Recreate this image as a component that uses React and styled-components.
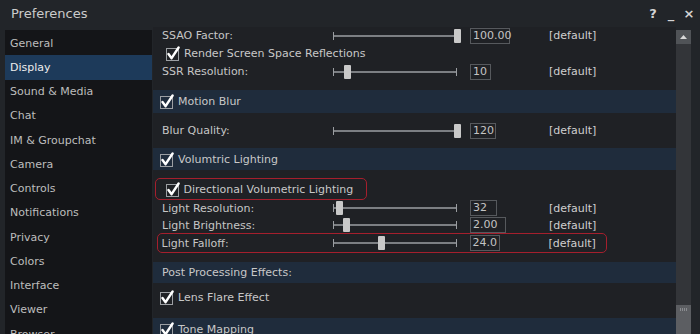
import React from 'react';
import styled, { createGlobalStyle } from 'styled-components';

const Global = createGlobalStyle`
  html, body { margin: 0; padding: 0; background: #212428; }
  body { font-family: "DejaVu Sans", "Liberation Sans", sans-serif; overflow: hidden; }
  * { box-sizing: border-box; }
`;

const Window = styled.div`
  width: 700px;
  height: 334px;
  background: #222529;
  display: flex;
  flex-direction: column;
  overflow: hidden;
  color: #c6c6c6;
  font-size: 11px;
`;

const TitleBar = styled.div`
  height: 27px;
  flex: none;
  display: flex;
  align-items: center;
  padding: 0 2px 0 11px;
`;

const Title = styled.div`
  flex: 1;
  font-size: 13px;
  color: #cbcbcb;
`;

const TitleButton = styled.div`
  width: 18px;
  text-align: center;
  font-size: 13px;
  font-weight: bold;
  color: #d4d4d4;
  line-height: 14px;
`;

const Body = styled.div`
  flex: 1;
  min-height: 0;
  display: flex;
`;

const Sidebar = styled.div`
  width: 147px;
  margin: 3px 1px 0 5px;
  padding-top: 1px;
  background: #141518;
  overflow: hidden;
  flex: none;
`;

const NavItem = styled.div`
  height: 24.25px;
  display: flex;
  align-items: center;
  padding-left: 5px;
  font-size: 11px;
  color: ${p => (p.$active ? '#ececec' : '#bdbdbd')};
  background: ${p => (p.$active ? '#1d3a5a' : 'transparent')};
`;

const Content = styled.div`
  flex: 1;
  display: flex;
  flex-direction: column;
  background: #1f2125;
  overflow: hidden;
`;

const Band = styled.div`
  height: ${p => p.$h}px;
  flex: none;
  display: flex;
  align-items: center;
  gap: 4px;
  padding-left: ${p => p.$pad}px;
  background: #1f2c3c;
  color: #c8c8c8;
`;

const Section = styled.div`
  height: ${p => p.$h}px;
  flex: none;
  display: flex;
  flex-direction: column;
  justify-content: ${p => p.$justify || 'flex-start'};
  padding-top: ${p => p.$pt || 0}px;
`;

const SliderRow = styled.div`
  height: ${p => p.$h}px;
  flex: none;
  display: grid;
  grid-template-columns: 171px 137px 79px auto;
  align-items: center;
  padding-left: ${p => p.$inset ?? 9}px;
`;

const Label = styled.div`
  color: #c6c6c6;
  white-space: nowrap;
`;

const Slider = styled.div`
  position: relative;
  width: 125px;
  height: 16px;
`;

const Track = styled.div`
  position: absolute;
  left: 0;
  right: 1px;
  top: 7px;
  height: 2px;
  background: #7c7f83;
`;

const Tick = styled.div`
  position: absolute;
  top: 4px;
  width: 1px;
  height: 8px;
  background: #9a9da1;
  ${p => (p.$side === 'left' ? 'left: 0;' : 'right: 1px;')}
`;

const Thumb = styled.div`
  position: absolute;
  top: 1px;
  width: 7px;
  height: 14px;
  border-radius: 1px;
  background: #c9c9c9;
`;

const ValueBox = styled.div`
  width: ${p => p.$w}px;
  height: 16px;
  border: 1px solid #56595d;
  padding: 0 2px;
  line-height: 14px;
  color: #c4c4c4;
  white-space: nowrap;
`;

const DefaultText = styled.div`
  color: #cfcfcf;
`;

const CheckRow = styled.div`
  height: ${p => p.$h}px;
  flex: none;
  display: flex;
  align-items: center;
  gap: 4px;
  padding-left: ${p => p.$pad}px;
  color: #c8c8c8;
`;

const Highlight = styled.div`
  flex: none;
  width: ${p => p.$w}px;
  height: ${p => p.$h}px;
  margin-left: ${p => p.$ml}px;
  margin-top: ${p => p.$mt || 0}px;
  border: 1.5px solid #a51f2d;
  border-radius: 5px;
  display: flex;
  flex-direction: column;
  justify-content: center;
`;

const Spacer = styled.div`
  height: ${p => p.$h}px;
  flex: none;
`;

const Scrollbar = styled.div`
  width: 15px;
  margin: 3px 9px 0 0;
  flex: none;
  display: flex;
  flex-direction: column;
  background: #333539;
`;

const ScrollButton = styled.div`
  height: 14px;
  background: #505357;
  display: flex;
  align-items: center;
  justify-content: center;
`;

const ScrollTrack = styled.div`
  flex: 1;
  display: flex;
  flex-direction: column;
  justify-content: flex-end;
`;

const ScrollThumb = styled.div`
  height: 29px;
  background: #5c5e62;
  display: flex;
  justify-content: center;
  padding-top: 3px;
`;

const Grip = styled.div`
  width: 7px;
  height: 3px;
  background: repeating-linear-gradient(90deg, #8a8c90 0 1px, transparent 1px 2px);
`;

const Check = () => (
  <svg width="14" height="15" viewBox="0 0 14 15" style={{ flex: 'none' }}>
    <rect x="0.5" y="2.5" width="12" height="12" fill="none" stroke="#9c9fa3" strokeWidth="1" />
    <path d="M2.5 8 L5.6 12.2 L12.6 1.5" fill="none" stroke="#ffffff" strokeWidth="2.4" strokeLinecap="round" strokeLinejoin="round" />
  </svg>
);

const SliderControl = ({ frac }) => (
  <Slider>
    <Track />
    <Tick $side="left" />
    <Tick $side="right" />
    <Thumb style={{ left: `${frac * 124 - 3.5}px` }} />
  </Slider>
);

const SettingRow = ({ label, frac, value, w, h, inset }) => (
  <SliderRow $h={h} $inset={inset}>
    <Label>{label}</Label>
    <SliderControl frac={frac} />
    <div>
      <ValueBox $w={w}>{value}</ValueBox>
    </div>
    <DefaultText>[default]</DefaultText>
  </SliderRow>
);

const nav = [
  'General', 'Display', 'Sound & Media', 'Chat', 'IM & Groupchat', 'Camera', 'Controls',
  'Notifications', 'Privacy', 'Colors', 'Interface', 'Viewer', 'Browser',
];

export default function App() {
  return (
    <>
      <Global />
      <Window>
        <TitleBar>
          <Title>Preferences</Title>
          <TitleButton>?</TitleButton>
          <TitleButton>_</TitleButton>
          <TitleButton>×</TitleButton>
        </TitleBar>
        <Body>
          <Sidebar>
            {nav.map(n => (
              <NavItem key={n} $active={n === 'Display'}>{n}</NavItem>
            ))}
          </Sidebar>
          <Content>
            <SettingRow label="SSAO Factor:" frac={1} value="100.00" w={40} h={17} />
            <CheckRow $h={18} $pad={13}><Check />Render Screen Space Reflections</CheckRow>
            <SettingRow label="SSR Resolution:" frac={0.12} value="10" w={21} h={19} />
            <Spacer $h={9} />
            <Band $h={23} $pad={7}><Check />Motion Blur</Band>
            <Section $h={35} $justify="center">
              <SettingRow label="Blur Quality:" frac={1} value="120" w={26} h={18} />
            </Section>
            <Band $h={22} $pad={7}><Check />Volumtric Lighting</Band>
            <Section $h={92}>
              <Highlight $w={212} $h={22} $ml={2} $mt={8}>
                <CheckRow $h={19} $pad={9.5}><Check />Directional Volumetric Lighting</CheckRow>
              </Highlight>
              <SettingRow label="Light Resolution:" frac={0.056} value="32" w={27} h={16} />
              <SettingRow label="Light Brightness:" frac={0.11} value="2.00" w={36} h={18} />
              <Highlight $w={450} $h={20} $ml={4} $mt={-1}>
                <SettingRow label="Light Falloff:" frac={0.395} value="24.0" w={30} h={17} inset={3.5} />
              </Highlight>
            </Section>
            <Band $h={21} $pad={9}>Post Processing Effects:</Band>
            <Section $h={35} $pt={5}>
              <CheckRow $h={18} $pad={7}><Check />Lens Flare Effect</CheckRow>
            </Section>
            <Band $h={22} $pad={7}><Check />Tone Mapping</Band>
          </Content>
          <Scrollbar>
            <ScrollButton>
              <svg width="7" height="4" viewBox="0 0 7 4">
                <path d="M0 4 L3.5 0 L7 4 Z" fill="#d8d8d8" />
              </svg>
            </ScrollButton>
            <ScrollTrack>
              <ScrollThumb><Grip /></ScrollThumb>
            </ScrollTrack>
          </Scrollbar>
        </Body>
      </Window>
    </>
  );
}
